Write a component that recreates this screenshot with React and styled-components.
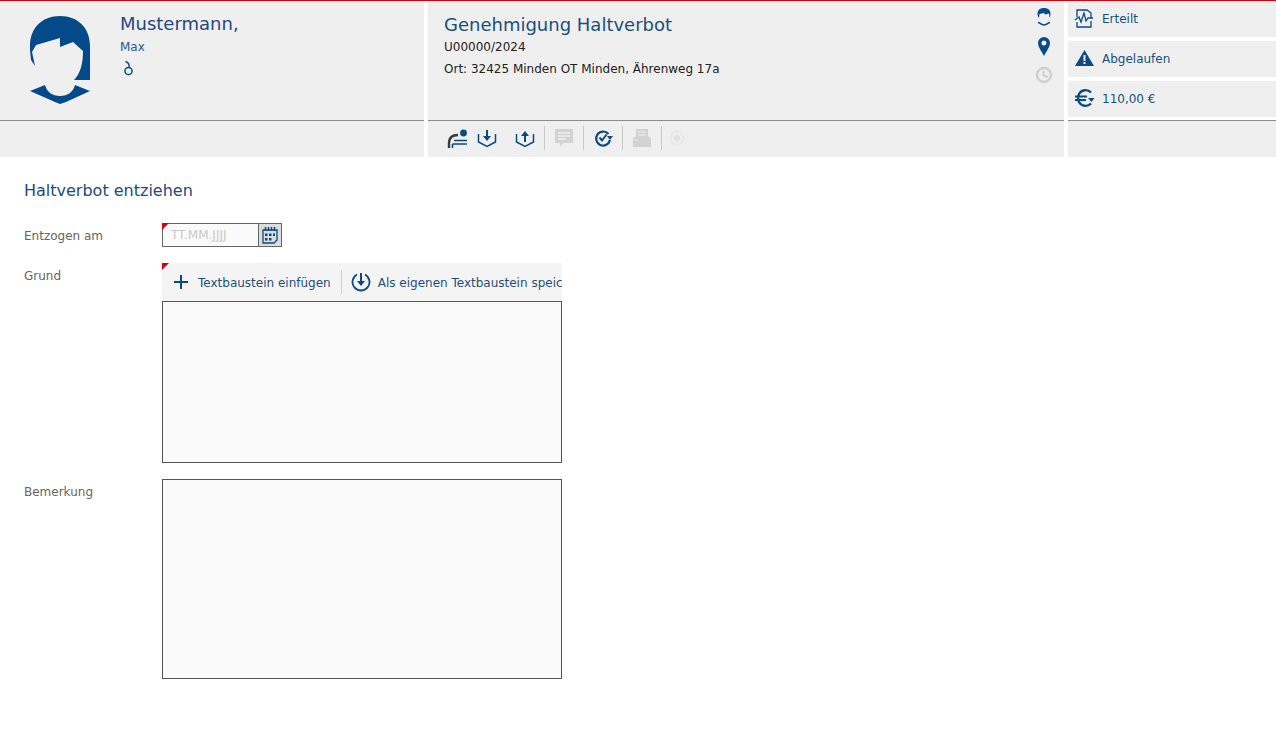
import React from "react";
import styled, { createGlobalStyle } from "styled-components";

const Global = createGlobalStyle`
  html, body { margin: 0; padding: 0; background: #fff; }
  body { font-family: "DejaVu Sans", "Liberation Sans", sans-serif; font-size: 12px; overflow: hidden; }
  * { box-sizing: border-box; }
`;
const Page = styled.div`width: 1276px; height: 743px; display: flex; flex-direction: column;`;
const Header = styled.header`
  display: grid; grid-template-columns: 424px 636px 208px; column-gap: 4px;
  height: 157px; border-top: 1px solid #d9000d;
`;
const Col = styled.section`display: flex; flex-direction: column; min-width: 0;`;
const Panel = styled.div`
  height: 119px; background: #efefef; display: flex; position: relative;
`;
const ActionBar = styled.div`
  height: 37px; background: #efefef; border-top: 1px solid #8c8c8c;
  display: flex; align-items: center; padding-left: ${p => p.$pad || 0}px; padding-bottom: 3px;
`;
const Avatar = styled.svg`width: 60px; height: 88px; margin: 15px 30px 0 30px; flex: none;`;
const Person = styled.div`padding-top: 12px; color: #1f4e86;`;
const PersonName = styled.div`font-size: 18px; line-height: 22px; color: #24497f;`;
const Given = styled.div`font-size: 12px; line-height: 15px; margin-top: 5px; color: #2a5a94;`;
const Gender = styled.svg`display: block; width: 16px; height: 18px; margin-top: 4px;`;
const Case = styled.div`padding: 14px 0 0 16px; flex: 1;`;
const CaseTitle = styled.div`font-size: 18px; line-height: 20px; color: #17507f;`;
const CaseLine = styled.div`font-size: 12px; line-height: 15px; color: #222; margin-top: ${p => p.$mt}px;`;
const SideIcons = styled.div`
  position: absolute; right: 11px; top: 6px; display: flex; flex-direction: column; gap: 9px; align-items: center;
  & > svg { display: block; }
`;
const Tool = styled.svg`width: ${p => p.$w || 24}px; height: 24px; flex: none; margin-left: ${p => p.$ml || 0}px;`;
const Sep = styled.span`width: 1px; height: 24px; background: #c8c8c8; margin: 0 ${p => p.$r || 8}px 0 ${p => p.$l || 8}px; flex: none;`;
const StatusList = styled.div`height: 119px; display: flex; flex-direction: column; gap: 4px;`;
const Status = styled.div`
  height: 36px; background: #efefef; display: flex; align-items: center; padding-left: 6px; gap: 7px;
  color: #17507f; font-size: 12px; line-height: 15px;
`;
const StatusIcon = styled.svg`width: 21px; height: 21px; flex: none; margin-top: -2px;`;
const Main = styled.main`padding: 24px 0 0 24px;`;
const Title = styled.h2`margin: 0 0 22px; font-weight: 400; font-size: 16px; line-height: 20px; color: #24497f;`;
const Row = styled.div`display: grid; grid-template-columns: 138px 400px; margin-bottom: ${p => p.$mb}px;`;
const Label = styled.label`font-size: 12px; line-height: 15px; color: #66665a; padding-top: 6px;`;
const Corner = styled.span`
  position: absolute; left: 0; top: 0; width: 0; height: 0;
  border-top: 7px solid #d9000d; border-right: 7px solid transparent; z-index: 1;
`;
const DateField = styled.div`display: flex; position: relative; width: 120px; height: 24px;`;
const DateInput = styled.div`
  width: 97px; height: 24px; border: 1px solid #666; background: #fafafa; color: #c9c9c9;
  font-size: 12px; line-height: 22px; padding-left: 8px;
`;
const DateButton = styled.button`
  width: 24px; height: 24px; padding: 0; margin-left: -1px; border: 1px solid #666; background: #dcdcdc;
  display: flex; align-items: center; justify-content: center;
`;
const Editor = styled.div`position: relative; width: 400px;`;
const EditorBar = styled.div`
  height: 38px; background: #f4f4f4; display: flex; align-items: center; overflow: hidden;
  white-space: nowrap; color: #1f4e7c; font-size: 12px; padding-left: 9px;
`;
const EditorIcon = styled.svg`width: 20px; height: 20px; flex: none;`;
const EditorText = styled.span`margin-left: 7px; padding-top: 2px; flex: none;`;
const EditorSep = styled.span`width: 1px; height: 24px; background: #cfcfcf; flex: none; margin: 0 9px 0 10px;`;
const Area = styled.div`width: 400px; height: ${p => p.$h}px; border: 1px solid #555; background: #fafafa;`;

const B = "#0b4a85";

export default function App() {
  return (
    <Page>
      <Global />
      <Header>
        <Col>
          <Panel>
            <Avatar viewBox="0 0 60 88">
              <path fill="#034a8a" d="M0 30C0 12 12 0 30 0S60 12 60 30V64H44C50 58 53 48 53 35L43 26 30 31V22L6 29 2 36 5 50 1 44 0 34Z" />
              <path fill="#034a8a" d="M0 75 15 69C17 76 22 80 30 80S43 76 45 69L60 75 36 86 30 88 25 86Z" />
            </Avatar>
            <Person>
              <PersonName>Mustermann,</PersonName>
              <Given>Max</Given>
              <Gender viewBox="0 0 16 18">
                <circle cx="8.500" cy="12" r="3.600" fill="none" stroke={B} strokeWidth="1.500" />
                <path d="M9 8.500C9.500 6 8.500 3.500 5.500 2.500" fill="none" stroke={B} strokeWidth="1.400" />
              </Gender>
            </Person>
          </Panel>
          <ActionBar />
        </Col>
        <Col>
          <Panel>
            <Case>
              <CaseTitle>Genehmigung Haltverbot</CaseTitle>
              <CaseLine $mt={5}>U00000/2024</CaseLine>
              <CaseLine $mt={7}>Ort: 32425 Minden OT Minden, Ährenweg 17a</CaseLine>
            </Case>
            <SideIcons>
              <svg width="16" height="20" viewBox="0 0 16 20">
                <path fill={B} d="M1.500 7C1.500 3 4 1 8 1s6.500 2 6.500 6c0 1.500-.3 2.500-.8 4L13 6.500 9 7.500 8 6 3.500 7 3 11C2 9.500 1.500 8.500 1.500 7Z" />
                <path fill="none" stroke={B} strokeWidth="1.600" d="M2 15.500C4 15.500 4.500 18 8 18s4-2.500 6-2.500" />
              </svg>
              <svg width="14" height="21" viewBox="0 0 14 21">
                <path fill={B} fillRule="evenodd" d="M7 1a6 6 0 0 1 6 6c0 4-4 9-6 13C5 16 1 11 1 7a6 6 0 0 1 6-6Zm0 3.500a2.500 2.500 0 1 0 0 5 2.500 2.500 0 0 0 0-5Z" />
              </svg>
              <svg width="18" height="18" viewBox="0 0 18 18">
                <circle cx="9" cy="9" r="7" fill="none" stroke="#cfcfcf" strokeWidth="2.400" />
                <path d="M8.500 4.500V9.500L13 11" fill="none" stroke="#cfcfcf" strokeWidth="2" />
              </svg>
            </SideIcons>
          </Panel>
          <ActionBar $pad={18}>
            <Tool viewBox="0 0 24 24">
              <path fill="none" stroke="#3a3a3a" strokeWidth="2.400" d="M3 22v-5c0-6 4-8 9-8" />
              <path fill="none" stroke={B} strokeWidth="1.600" d="M8 14.500h13M6.500 18H21M6.500 18v4" />
              <circle cx="17.500" cy="7" r="3.400" fill={B} />
            </Tool>
            <Tool viewBox="0 0 24 24" $ml={5}>
              <path fill="none" stroke={B} strokeWidth="1.500" d="M3.500 8v8l8.500 4.500 8.500-4.500V8" />
              <path fill={B} d="M11 4h2v6h3l-4 5-4-5h3Z" />
            </Tool>
            <Tool viewBox="0 0 24 24" $ml={14}>
              <path fill="none" stroke={B} strokeWidth="1.500" d="M3.500 8v8l8.500 4.500 8.500-4.500V8" />
              <path fill={B} d="M11 16h2v-6h3l-4-5-4 5h3Z" />
            </Tool>
            <Sep $l={7} />
            <Tool viewBox="0 0 22 24" $w={22}>
              <path fill="#d2d2d2" d="M2 3h18v14H10l-3 4v-4H2Z" />
              <path stroke="#efefef" strokeWidth="1.300" d="M5 7h12M5 10h12M5 13h8" />
            </Tool>
            <Sep />
            <Tool viewBox="0 0 22 24" $w={22}>
              <path fill="none" stroke={B} strokeWidth="2.200" d="M16.500 8A7 7 0 1 0 18 14" />
              <path fill="none" stroke={B} strokeWidth="2" d="M7.500 11.500l2.500 3 4.500-6" />
              <path fill={B} d="M15 10h6l-3 4Z" />
            </Tool>
            <Sep />
            <Tool viewBox="0 0 22 24" $w={22}>
              <path fill="#d2d2d2" d="M5 3h12v8H5ZM2 13a2 2 0 0 1 2-2h14a2 2 0 0 1 2 2v8H2Z" />
              <path stroke="#efefef" strokeWidth="1.200" d="M7 6h8M7 9h8M3 14h4" />
            </Tool>
            <Sep $r={6} />
            <Tool viewBox="0 0 18 24" $w={18}>
              <circle cx="9" cy="12" r="6.500" fill="none" stroke="#e0e0e0" strokeWidth="1.600" strokeDasharray="1.500 1" />
              <circle cx="9" cy="12" r="3" fill="#e0e0e0" />
            </Tool>
          </ActionBar>
        </Col>
        <Col>
          <StatusList>
            <Status>
              <StatusIcon viewBox="0 0 21 21">
                <path fill="none" stroke={B} strokeWidth="1.300" d="M3 9V2h10l4 3v5M3 14v5h14v-6" />
                <path fill="none" stroke={B} strokeWidth="1.300" d="M1 12l4-3 2 5 3-9 2 8 2-3h5" />
              </StatusIcon>
              Erteilt
            </Status>
            <Status>
              <StatusIcon viewBox="0 0 21 21">
                <path fill={B} fillRule="evenodd" d="M10.500 2 20 18H1ZM9.500 7v6h2V7Zm0 7v2h2v-2Z" />
              </StatusIcon>
              Abgelaufen
            </Status>
            <Status>
              <StatusIcon viewBox="0 0 21 21">
                <path fill="none" stroke={B} strokeWidth="2.400" d="M17 4.500A7.500 7.500 0 0 0 5 6c-1 2-1 6 0 8a7.500 7.500 0 0 0 12 1.500" />
                <path stroke={B} strokeWidth="1.900" d="M1 8.500h12M1 12h11" />
                <path fill={B} d="M14 10h6.500l-3 4Z" />
              </StatusIcon>
              110,00 €
            </Status>
          </StatusList>
          <ActionBar />
        </Col>
      </Header>
      <Main>
        <Title>Haltverbot entziehen</Title>
        <Row $mb={16}>
          <Label>Entzogen am</Label>
          <DateField>
            <Corner />
            <DateInput>TT.MM.JJJJ</DateInput>
            <DateButton aria-label="Kalender">
              <svg width="16" height="18" viewBox="0 0 16 18">
                <path fill="none" stroke={B} strokeWidth="1.300" d="M1 4h14v10l-3 3H1Z" />
                <path stroke={B} strokeWidth="1.500" d="M3.500 1v4M6.500 1v4M9.500 1v4M12.500 1v4" />
                <path fill={B} d="M3 7.500h2.500V10H3ZM7 7.500h2.500V10H7ZM11 7.500h2V10h-2ZM3 12h2.500v2.500H3ZM7 12h2.500v2.500H7Z" />
              </svg>
            </DateButton>
          </DateField>
        </Row>
        <Row $mb={16}>
          <Label>Grund</Label>
          <Editor>
            <Corner />
            <EditorBar>
              <EditorIcon viewBox="0 0 20 20">
                <path stroke={B} strokeWidth="2" d="M3 10h14M10 3v14" />
              </EditorIcon>
              <EditorText>Textbaustein einfügen</EditorText>
              <EditorSep />
              <EditorIcon viewBox="0 0 20 20">
                <path fill="none" stroke={B} strokeWidth="1.800" d="M6 2.500a8.500 8.500 0 1 0 8 0" />
                <path fill={B} d="M9 1h2v8h3l-4 5-4-5h3Z" />
              </EditorIcon>
              <EditorText>Als eigenen Textbaustein speichern</EditorText>
            </EditorBar>
            <Area $h={162} />
          </Editor>
        </Row>
        <Row $mb={0}>
          <Label>Bemerkung</Label>
          <Area $h={200} />
        </Row>
      </Main>
    </Page>
  );
}
